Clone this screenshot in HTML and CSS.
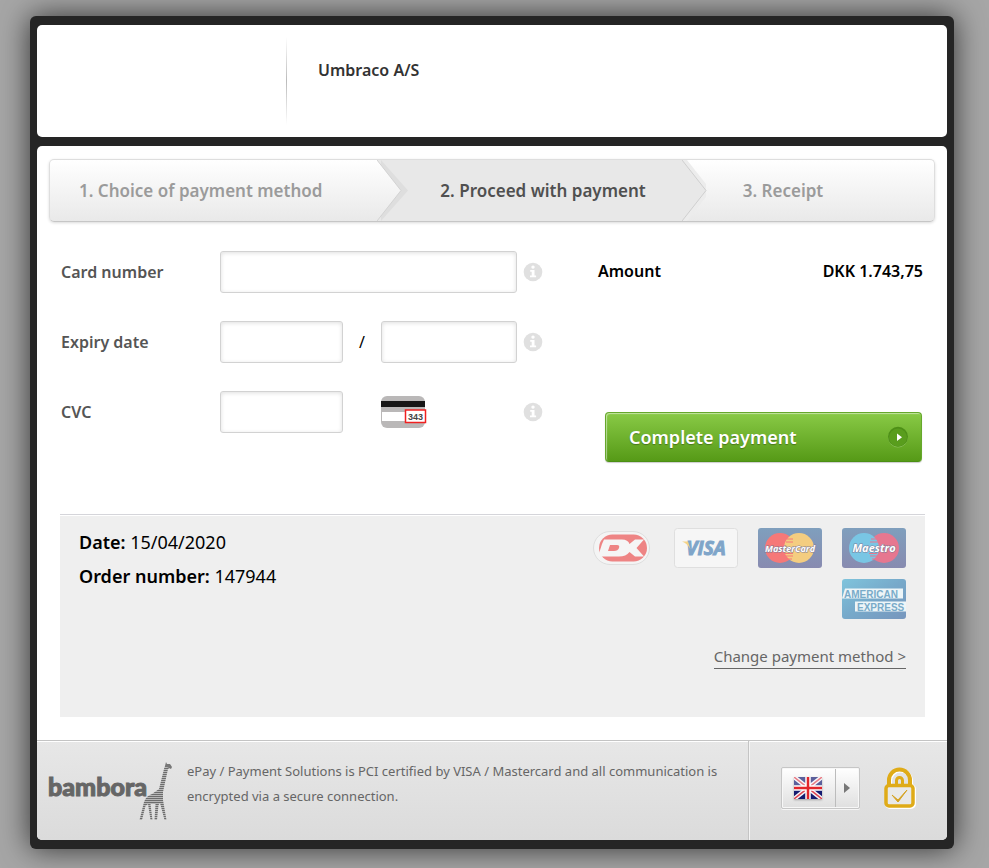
FILE: index.html
```html
<!DOCTYPE html>
<html lang="en">
<head>
<meta charset="utf-8">
<title>Payment window</title>
<link rel="stylesheet" href="styles.css">
</head>
<body>
<svg class="sprite" aria-hidden="true">
  <symbol id="info" viewBox="0 0 20 20">
    <circle cx="10" cy="10" r="9.3" fill="#e0e0e0"/>
    <circle cx="10" cy="5.1" r="1.7" fill="#fff"/>
    <path d="M7.2 8h4.3v5.6h1.6v1.7H7v-1.7h1.7V9.7H7.2z" fill="#fff"/>
  </symbol>
</svg>
<div class="window">
  <header class="merchant panel">
    <h1 class="merchant-name">Umbraco A/S</h1>
  </header>

  <main class="checkout panel">
    <ol class="steps">
      <li class="step step-first">1. Choice of payment method
        <svg class="chevron" viewBox="0 0 32 61" aria-hidden="true"><path d="M4 0L31 30.500L4 61z" fill="#dedede"/><path d="M0 0L24 30.500L0 61z" fill="url(#g)"/><path d="M0 0L24 30.500L0 61" fill="none" stroke="#d2d2d2"/>
          <defs><linearGradient id="g" x2="0" y2="1"><stop stop-color="#fff"/><stop offset="1" stop-color="#e9e9e9"/></linearGradient></defs></svg>
      </li>
      <li class="step step-current" aria-current="step">2. Proceed with payment
        <svg class="chevron" viewBox="0 0 32 61" aria-hidden="true"><path d="M0 0H5L24 24V37L5 61H0z" fill="#ececec"/><path d="M0 0L24 30.500L0 61z" fill="#e8e8e8"/><path d="M0 0L24 30.500L0 61" fill="none" stroke="#cfcfcf"/></svg>
      </li>
      <li class="step step-last">3. Receipt</li>
    </ol>

    <form class="payment">
      <div class="fields">
        <label class="field-label" for="card">Card number</label>
        <input class="box wide" id="card" type="text" inputmode="numeric">
        <svg class="info" role="img" aria-label="Card number help"><use href="#info"/></svg>

        <label class="field-label" for="month">Expiry date</label>
        <input class="box" id="month" type="text" inputmode="numeric">
        <span class="slash">/</span>
        <input class="box" id="year" type="text" inputmode="numeric" aria-label="Expiry year">
        <svg class="info" role="img" aria-label="Expiry date help"><use href="#info"/></svg>

        <label class="field-label" for="cvc">CVC</label>
        <input class="box" id="cvc" type="text" inputmode="numeric">
        <svg class="cvc-card" viewBox="0 0 46 32" role="img" aria-label="Security code on the card">
          <rect width="44" height="32" rx="6" fill="#bab8b8"/>
          <path d="M0 5h44v6H0z" fill="#171717"/><path d="M1 16h42v9H1z" fill="#fff"/>
          <rect x="24.500" y="14" width="20" height="12.500" fill="#fff" stroke="#f02020" stroke-width="1.500"/>
          <text x="27" y="23.500" class="cvc-digits">343</text>
        </svg>
        <svg class="info" role="img" aria-label="CVC help"><use href="#info"/></svg>
      </div>
      <div class="summary">
        <div class="amount"><span>Amount</span><span>DKK 1.743,75</span></div>
        <button class="complete" type="submit">Complete payment
          <svg class="go" viewBox="0 0 22 22" aria-hidden="true"><circle cx="11" cy="11.500" r="10" fill="#88be58"/><circle cx="11" cy="10.800" r="10" fill="#4d8f16"/><circle cx="11" cy="11.500" r="9" fill="#599d1d"/><path d="M10 7.500l5 3.700-5 3.700z" fill="#fff"/></svg>
        </button>
      </div>
    </form>

    <section class="order">
      <div class="order-info">
        <p><strong>Date:</strong> 15/04/2020</p>
        <p><strong>Order number:</strong> 147944</p>
      </div>
      <div class="order-side">
        <div class="cards">
          <svg class="card" viewBox="0 0 64 40" role="img" aria-label="Dankort">
            <rect x="3.500" y="3.500" width="56" height="33" rx="16.500" fill="#f4f4f4" stroke="#dedede"/>
            <rect x="9" y="6.500" width="48" height="27" rx="13.500" fill="#ee8484"/>
            <path d="M14 11.500H32Q38 11.500 39.500 16L45 11.500H54L46.500 20L54 28.500H45L39.500 24Q36 28.500 29 28.500H8L12 16z" fill="#f5f5f5"/>
            <path d="M20 17H27Q30 17 29 20T24 23H18z" fill="#ee8484"/>
          </svg>
          <svg class="card" viewBox="0 0 64 40" role="img" aria-label="Visa">
            <rect x=".5" y=".5" width="63" height="39" rx="3" fill="#f6f6f6" stroke="#dfdfdf"/>
            <text x="32" y="27" class="visa">VISA</text><path d="M8 13.500h6l2.500 8q-3-6-8.500-8z" fill="#f5d488"/>
          </svg>
          <svg class="card" viewBox="0 0 64 40" role="img" aria-label="MasterCard">
            <defs><linearGradient id="navy" x2="0" y2="1"><stop stop-color="#7f9fbd"/><stop offset="1" stop-color="#888bb0"/></linearGradient></defs>
            <rect width="64" height="40" rx="3" fill="url(#navy)"/><circle cx="22" cy="20" r="15" fill="#f67878"/><circle cx="41" cy="20" r="15" fill="#f4cd80"/>
            <path d="M29 11h6M28 14h7M27 25.500h8M28 28h7M30 31h4" stroke="#f67878"/>
            <text x="32" y="24" class="master">MasterCard</text>
          </svg>
          <svg class="card" viewBox="0 0 64 40" role="img" aria-label="Maestro">
            <rect width="64" height="40" rx="3" fill="url(#navy)"/><circle cx="42" cy="20" r="15" fill="#e67790"/><circle cx="22" cy="20" r="15" fill="#79c6e4"/>
            <path d="M29 11h6M28 14h8M27 25.500h8M28 28h8M30 31h4" stroke="#e67790"/>
            <text x="32" y="24" class="maestro">Maestro</text>
          </svg>
          <svg class="card" viewBox="0 0 64 40" role="img" aria-label="American Express">
            <defs><linearGradient id="amex" x2="1" y2="1"><stop stop-color="#7fc4dc"/><stop offset=".5" stop-color="#77a9ca"/><stop offset="1" stop-color="#7796bd"/></linearGradient></defs>
            <rect width="64" height="40" rx="3" fill="url(#amex)"/>
            <path d="M0 19.500L3 9.500h58v10zM13 22.500h51v10H13z" fill="#edf5f8"/>
            <text x="2" y="18.500" class="amex">AMERICAN</text><text x="15" y="31.500" class="amex">EXPRESS</text>
          </svg>
        </div>
        <a class="change" href="#">Change payment method &gt;</a>
      </div>
    </section>

    <footer class="footer">
      <div class="certified">
        <svg class="bambora" viewBox="0 0 128 60" role="img" aria-label="bambora">
          <defs><pattern id="stripes" width="4" height="2" patternUnits="userSpaceOnUse"><path d="M0 0h4v1.300H0z" fill="#6c6c6c"/><path d="M0 1.300h4v.7H0z" fill="#b4b4b4"/></pattern></defs>
          <text x="0" y="34" class="wordmark">bambora</text>
          <path fill="url(#stripes)" d="M119 2L123 5L120 7L115 30L115 38L118.500 58H116.500L112 41L110.500 43L109 58H106.500L107.500 42L102.500 42L104.500 58H102.500L100 42L97.500 44L94 58H91.500L96 40Q98 34 104 32L111 27L116.500 5z"/>
          <path d="M118 0l1 2 3 0 2 3-1 2-6-3z" fill="#777"/>
        </svg>
        <p>ePay / Payment Solutions is PCI certified by VISA / Mastercard and all communication is encrypted via a secure connection.</p>
      </div>
      <div class="footer-tools">
        <button class="language" type="button" aria-label="Language: English">
          <span class="flag-cell"><svg class="flag" viewBox="0 0 28 22" aria-hidden="true">
            <path d="M0 0h28v22H0z" fill="#151b70"/><path d="M0 0l28 22M28 0L0 22" stroke="#f4f4f8" stroke-width="4.500"/><path d="M0 0l28 22M28 0L0 22" stroke="#df4552" stroke-width="1.500"/><path d="M0 0h28v10H0z" fill="#fff" opacity=".3"/>
            <path d="M14 0v22M0 11h28" stroke="#fff" stroke-width="5.500"/><path d="M14 0v22M0 11h28" stroke="#e2262b" stroke-width="2.500"/>
          </svg></span>
          <svg class="arrow" viewBox="0 0 6 10" aria-hidden="true"><path d="M0 0l6 5-6 5z" fill="#777"/></svg>
        </button>
        <svg class="lock" viewBox="0 0 32 42" role="img" aria-label="Secure connection">
          <g fill="none" stroke="#fff" stroke-width="4" transform="translate(1 1)"><path d="M5 18V13a10.500 10.500 0 0 1 21 0v5"/><rect x="2" y="18" width="27" height="21" rx="3"/></g>
          <rect x="2" y="18" width="27" height="21" rx="3" fill="#e9e9e9"/>
          <g fill="none" stroke="#dfab18" stroke-width="4"><path d="M5 18V13a10.500 10.500 0 0 1 21 0v5"/><path d="M12.500 18V13.500a3 3 0 0 1 6 0V18" stroke-width="3"/><rect x="2" y="18.500" width="27" height="20.500" rx="3" stroke-width="3.500"/></g>
          <path d="M8 28l6 5L23 23l-9 12z" fill="#d5a323" stroke="#d5a323"/>
        </svg>
      </div>
    </footer>
  </main>
</div>
</body>
</html>
```
FILE: styles.css
```css
* { box-sizing: border-box; }
body {
  margin: 0;
  padding: 16px 35px 20px 30px;
  background: #a6a6a6;
  color: #000;
  font-family: "Lucida Grande", "Lucida Sans Unicode", "Noto Sans", sans-serif;
  font-size: 16px;
}
h1, p, ol { margin: 0; padding: 0; }
.sprite { position: absolute; width: 0; height: 0; }
.window {
  padding: 9px 7px;
  background: #252525;
  border-radius: 6px;
  box-shadow: 0 0 30px rgba(0, 0, 0, .7);
}
.panel { background: #fff; border-radius: 5px; overflow: hidden; }
.merchant { display: flex; height: 112px; padding: 12px 0 12px 249px; margin-bottom: 9px; }
.merchant::before {
  content: "";
  width: 1px;
  background: linear-gradient(#fff, #bbb 50%, #fff);
}
.merchant-name { padding: 22px 0 0 31px; font-size: 16px; line-height: 22px; font-weight: 600; color: #333; }

.steps {
  display: grid;
  grid-template-columns: 327fr 304fr 252fr;
  margin: 13px 12px 0;
  height: 63px;
  list-style: none;
  border: 1px solid #dedede;
  border-bottom-color: #c6c6c6;
  border-radius: 5px;
  background: linear-gradient(#fff, #e9e9e9);
  box-shadow: 0 1px 3px rgba(0, 0, 0, .15);
  font-size: 17px;
  line-height: 61px;
  font-weight: 600;
  color: #9b9b9b;
}
.step { position: relative; }
.step-first { padding-left: 29px; }
.step-current { padding-left: 63px; background: #e8e8e8; color: #505050; }
.step-last { padding-left: 61px; }
.chevron { position: absolute; z-index: 1; left: 100%; top: 0; width: 32px; height: 61px; }

.payment { display: flex; justify-content: space-between; padding: 29px 24px 52px; }
.fields {
  display: grid;
  grid-template-columns: 159px 123px 38px 136px 26px;
  row-gap: 28px;
  align-items: center;
  align-content: start;
}
.field-label { font-weight: 600; color: #555; }
.box {
  width: 100%;
  height: 42px;
  padding: 0 10px;
  border: 1px solid #d2d2d2;
  border-radius: 3px;
  background: #fff;
  box-shadow: inset 0 1px 4px rgba(0, 0, 0, .13);
  font: inherit;
}
.wide { grid-column: 2 / 5; }
.slash { text-align: center; }
.info { grid-column: 5; justify-self: end; width: 20px; height: 20px; }
.cvc-card { grid-column: 4; width: 46px; height: 32px; }
.cvc-digits { font: bold 9px "Liberation Sans", sans-serif; fill: #444; }
.summary { display: flex; flex-direction: column; width: 325px; }
.amount { display: flex; justify-content: space-between; padding-top: 9px; line-height: 22px; font-weight: 600; }
.complete {
  display: flex;
  justify-content: space-between;
  align-items: center;
  width: 317px;
  height: 50px;
  margin: 130px 0 0 7px;
  padding: 0 12px 0 23px;
  border: 1px solid #66a82c;
  border-bottom-color: #4b8f13;
  border-radius: 4px;
  background: linear-gradient(#89ca46, #569a17);
  box-shadow: inset 1px 1px 1px rgba(255, 255, 255, .5), 0 1px 1px rgba(0, 0, 0, .2);
  color: #fff;
  font: 600 18px "Lucida Grande", "Noto Sans", sans-serif;
  text-shadow: 0 1px 1px rgba(0, 0, 0, .3);
}
.go { width: 22px; height: 22px; }

.order {
  display: flex;
  justify-content: space-between;
  min-height: 203px;
  margin: 0 22px 0 23px;
  padding: 10px 19px 0;
  border-top: 1px solid #d5d5da;
  background: #efefef;
  box-shadow: inset 0 1px #fff;
}
.order-info { font-size: 18px; line-height: 34px; }
.order-info strong { font-weight: 600; }
.order-side { display: flex; flex-direction: column; align-items: flex-end; }
.cards { display: flex; flex-wrap: wrap; justify-content: flex-end; gap: 11px 20px; width: 320px; padding-top: 3px; }
.card { width: 64px; height: 40px; }
.visa { font: italic bold 19px "Open Sans", sans-serif; fill: #7fa5c9; stroke: #7fa5c9; text-anchor: middle; }
.master, .maestro { fill: #fff; stroke: #7c7c98; stroke-width: 1px; paint-order: stroke; text-anchor: middle; }
.master { font: italic bold 9px "Open Sans", sans-serif; }
.maestro { font: italic bold 11px "Open Sans", sans-serif; }
.amex { font: bold 10px "Liberation Sans", sans-serif; fill: #79abc9; }
.change { margin-top: 25px; color: #666; font-size: 15px; text-decoration: none; border-bottom: 1px solid #666; line-height: 24px; }

.footer {
  display: flex;
  height: 100px;
  margin-top: 23px;
  border-top: 1px solid #c4c4c4;
  background: linear-gradient(#e7e7e7, #dbdbdb);
  box-shadow: inset 0 1px #fff;
}
.certified { display: flex; flex: 1; gap: 11px; padding: 18px 20px 0 11px; }
.certified p { flex: 1; font-size: 13px; line-height: 25px; color: #666; }
.bambora { flex: none; width: 128px; height: 60px; margin-top: 3px; }
.wordmark { font: 900 25px Lato, sans-serif; fill: #666; stroke: #666; }
.footer-tools {
  display: flex;
  gap: 24px;
  width: 199px;
  padding: 26px 0 0 32px;
  border-left: 1px solid #c4c4c4;
  box-shadow: inset 1px 0 #f4f4f4;
}
.language {
  display: flex;
  align-items: center;
  width: 79px;
  height: 42px;
  padding: 0;
  border: 1px solid #c6c6c6;
  border-radius: 2px;
  background: linear-gradient(#fff, #dfdfdf);
  box-shadow: inset 0 0 0 1px #f7f7f7, 0 1px #f6f6f6;
}
.flag-cell { display: flex; align-items: center; height: 38px; padding: 0 13px 0 12px; border-right: 1px solid #bcbcbc; }
.flag { width: 28px; height: 22px; box-shadow: 0 1px 2px rgba(0, 0, 0, .3); }
.arrow { width: 6px; height: 10px; margin-left: 8px; }
.lock { width: 32px; height: 42px; }
```
